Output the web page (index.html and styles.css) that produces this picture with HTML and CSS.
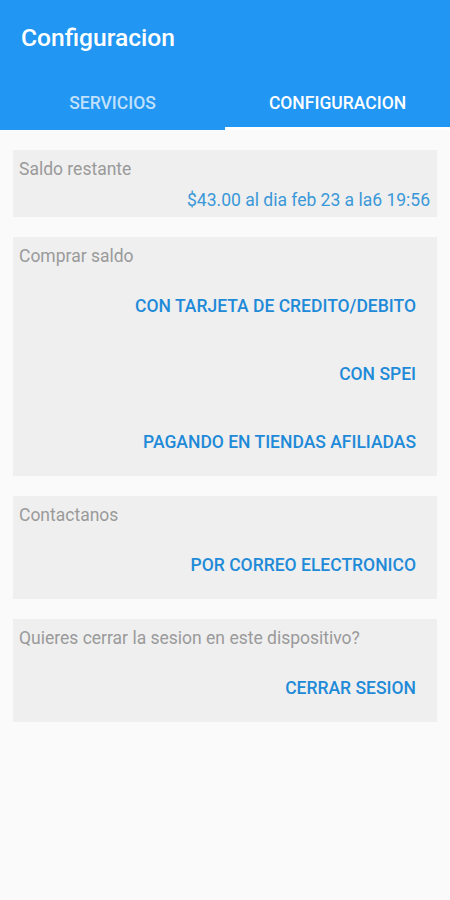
FILE: index.html
```html
<!DOCTYPE html>
<html lang="es">
<head>
    <meta charset="UTF-8">
    <meta name="viewport" content="width=device-width, initial-scale=1.0">
    <title>Configuracion</title>
    <link rel="stylesheet" href="styles.css">
</head>
<body>
    <header class="appbar">
        <div class="toolbar">
            <h1>Configuracion</h1>
        </div>
        <nav class="tabs">
            <div class="tab">SERVICIOS</div>
            <div class="tab active">CONFIGURACION</div>
        </nav>
    </header>

    <main class="content">
        <section class="card">
            <p class="label">Saldo restante</p>
            <p class="value">$43.00 al dia feb 23 a la6 19:56</p>
        </section>

        <section class="card">
            <p class="label">Comprar saldo</p>
            <button type="button" class="action">CON TARJETA DE CREDITO/DEBITO</button>
            <button type="button" class="action">CON SPEI</button>
            <button type="button" class="action">PAGANDO EN TIENDAS AFILIADAS</button>
        </section>

        <section class="card">
            <p class="label">Contactanos</p>
            <button type="button" class="action">POR CORREO ELECTRONICO</button>
        </section>

        <section class="card">
            <p class="label">Quieres cerrar la sesion en este dispositivo?</p>
            <button type="button" class="action">CERRAR SESION</button>
        </section>
    </main>
</body>
</html>
```

FILE: styles.css
```css
body {
    margin: 0;
    font-family: Roboto, "Liberation Sans", Arial, sans-serif;
    background: #fafafa;
    min-height: 100vh;
}

.appbar {
    background: #2196f3;
    color: #fff;
}

.toolbar {
    height: 75px;
    display: flex;
    align-items: center;
    padding-left: 21px;
}

.toolbar h1 {
    margin: 0;
    font-size: 24.6px;
    font-weight: 500;
}

.tabs {
    display: flex;
    height: 55px;
}

.tab {
    flex: 1;
    display: flex;
    align-items: center;
    justify-content: center;
    font-size: 17.5px;
    font-weight: 500;
    color: rgba(255, 255, 255, 0.72);
    box-sizing: border-box;
}

.tab.active {
    color: #fff;
    border-bottom: 3px solid #fff;
    padding-top: 3px;
}

.content {
    padding: 20px 13px;
    display: flex;
    flex-direction: column;
    gap: 20px;
}

.card {
    background: #efefef;
    padding: 0 7px 0 6px;
    display: flex;
    flex-direction: column;
    align-items: flex-end;
}

.label {
    align-self: stretch;
    margin: 0;
    height: 35px;
    line-height: 38px;
    font-size: 17.5px;
    color: #9a9a9a;
}

.value {
    margin: 0;
    height: 32px;
    line-height: 31px;
    font-size: 17.5px;
    color: #3a98d8;
}

.action {
    height: 68px;
    padding: 0 14px;
    border: none;
    background: none;
    font-family: inherit;
    font-size: 17.5px;
    font-weight: 500;
    color: #1e8ad8;
    cursor: pointer;
}
```
